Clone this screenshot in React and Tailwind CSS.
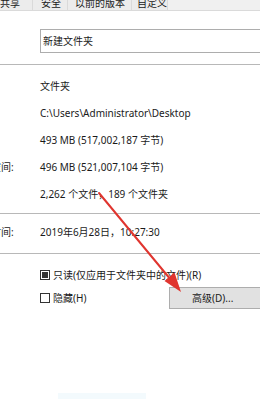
import React from 'react';

const TABS = [
  { label: '共享', w: 'w-[33px]', pl: 'pl-0' },
  { label: '安全', w: 'w-[35px]', pl: 'pl-[8px]' },
  { label: '以前的版本', w: 'w-[64px]', pl: 'pl-[7px]' },
  { label: '自定义', w: 'w-[36px]', pl: 'pl-[5px]' },
];

const ROWS = [
  { label: '类型:', value: '文件夹' },
  { label: '位置:', value: 'C:\\Users\\Administrator\\Desktop' },
  { label: '大小:', value: '493 MB (517,002,187 字节)' },
  { label: '占用空间:', value: '496 MB (521,007,104 字节)' },
  { label: '包含:', value: '2,262 个文件，189 个文件夹' },
];

function Row({ label, value }) {
  return (
    <div className="flex items-center h-[27px]">
      <span className="w-[69px] -ml-[29px] shrink-0 whitespace-nowrap">{label}</span>
      <span className="whitespace-nowrap">{value}</span>
    </div>
  );
}

function Checkbox({ checked }) {
  return (
    <span className="w-[10px] h-[10px] shrink-0 border border-[#333] bg-white flex items-center justify-center">
      {checked && <span className="w-[6px] h-[6px] bg-[#333]" />}
    </span>
  );
}

export default function App() {
  return (
    <div className="relative w-[260px] h-[399px] overflow-hidden bg-white flex flex-col text-[10px] leading-[12px] text-[#1a1a1a] font-['Noto_Sans','Noto_Sans_CJK_SC',sans-serif]">
      {/* tab strip, cut off at the top */}
      <div className="flex h-[11px] shrink-0 bg-[#f0f0f0]">
        {TABS.map((t) => (
          <div key={t.label} className={`${t.w} ${t.pl} shrink-0 border-r border-b border-[#dadada] bg-[#ececec] overflow-hidden`}>
            <span className="block -mt-[2px] leading-[10px] whitespace-nowrap">{t.label}</span>
          </div>
        ))}
        <div className="flex-1 border-b border-[#dadada]" />
      </div>

      {/* name box */}
      <div className="mt-[18px] ml-[40px] -mr-[12px] h-[24px] shrink-0 border border-[#adadad] flex items-center pl-[2px]">
        新建文件夹
      </div>

      <div className="mt-[11px] h-px shrink-0 bg-[#b8b8b8]" />

      <div className="mt-[7px] flex flex-col shrink-0">
        {ROWS.map((r) => (
          <Row key={r.label} {...r} />
        ))}
      </div>

      <div className="mt-[6px] h-px shrink-0 bg-[#b8b8b8]" />

      <div className="mt-[4px] shrink-0">
        <Row label="创建时间:" value="2019年6月28日，10:27:30" />
      </div>

      <div className="mt-[8px] h-px shrink-0 bg-[#b8b8b8]" />

      {/* attributes */}
      <div className="mt-[11px] h-[20px] shrink-0 flex items-center pl-[40px] gap-[3px] whitespace-nowrap">
        <Checkbox checked />
        <span>只读(仅应用于文件夹中的文件)(R)</span>
      </div>
      <div className="mt-[2px] h-[22px] shrink-0 flex items-center pl-[40px] whitespace-nowrap">
        <Checkbox />
        <span className="ml-[3px]">隐藏(H)</span>
        <button className="ml-auto -mr-[6px] w-[97px] h-[22px] shrink-0 border border-[#adadad] bg-[#e1e1e1] text-left pl-[22px] text-[10px] text-[#1a1a1a]">
          高级(D)...
        </button>
      </div>

      <div className="mt-auto ml-[58px] w-[88px] h-[6px] shrink-0 bg-[#f3fafd]" />

      {/* red annotation arrow */}
      <svg className="absolute inset-0 pointer-events-none" width="260" height="399" viewBox="0 0 260 399">
        <line x1="99" y1="193" x2="171" y2="280" stroke="#e0352f" strokeWidth="2" strokeLinecap="round" />
        <polygon points="181,292 164.5,281 174.5,272.5" fill="#e0352f" />
      </svg>
    </div>
  );
}
